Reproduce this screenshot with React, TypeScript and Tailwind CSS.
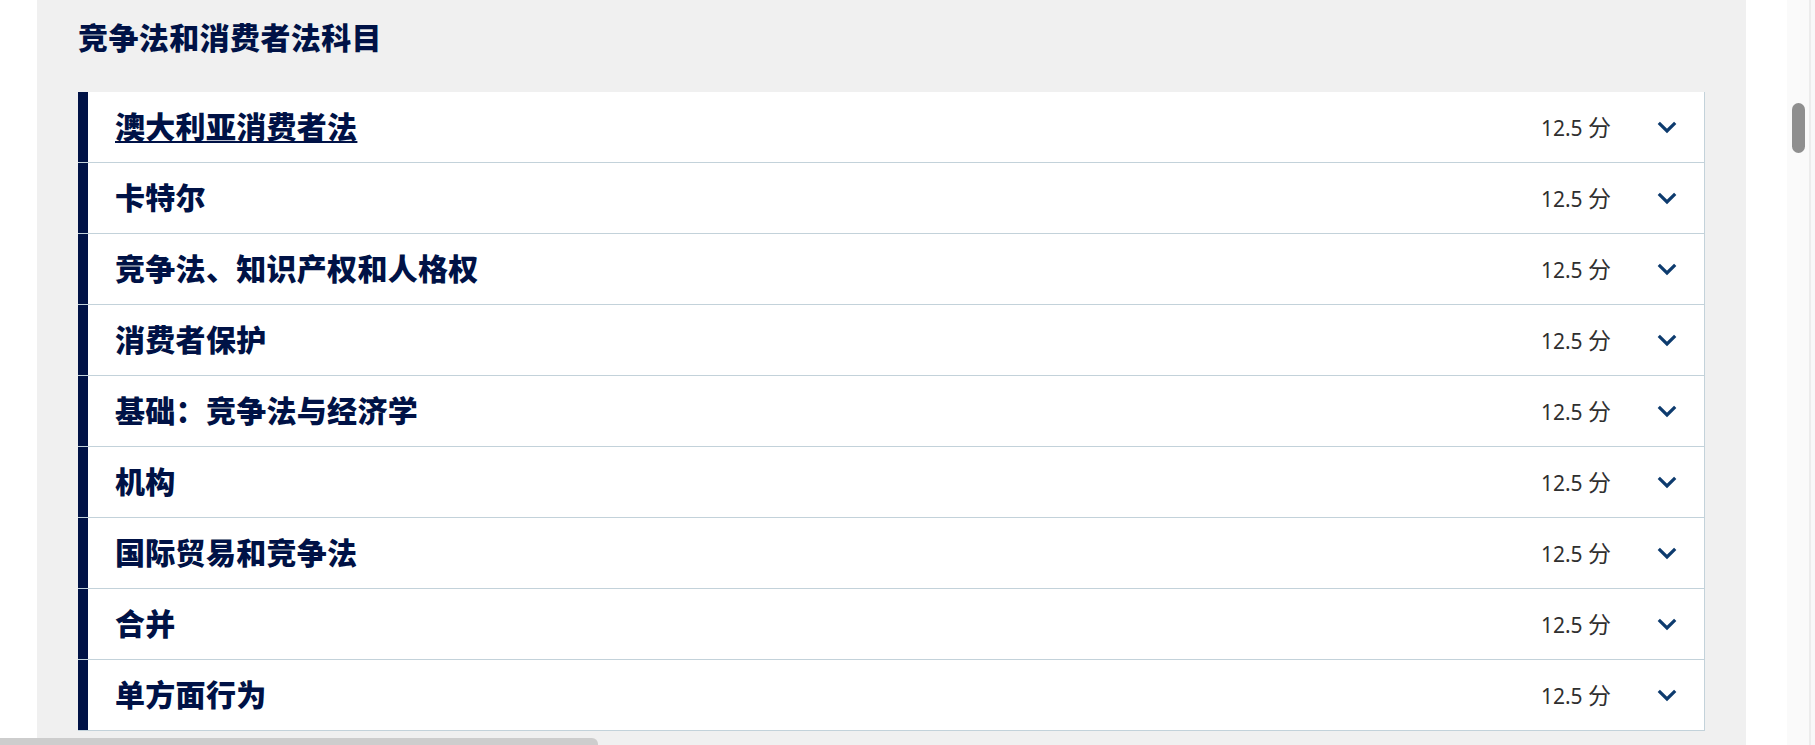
import React from 'react';

const subjects = [
  '澳大利亚消费者法',
  '卡特尔',
  '竞争法、知识产权和人格权',
  '消费者保护',
  '基础：竞争法与经济学',
  '机构',
  '国际贸易和竞争法',
  '合并',
  '单方面行为',
];

function Chevron() {
  return (
    <svg width="20" height="13" viewBox="0 0 20 13" className="ml-[46px] mr-[27px] shrink-0" aria-hidden="true">
      <path d="M1.8 1.8 L10 10 L18.2 1.8" fill="none" stroke="#0d3b6e" strokeWidth="3.2" />
    </svg>
  );
}

export default function App() {
  return (
    <div className="flex h-[745px] w-[1815px] overflow-hidden bg-white font-['Noto_Sans','Noto_Sans_CJK_SC',sans-serif]">
      {/* page column */}
      <div className="relative flex w-[1746px] shrink-0">
        <div className="w-[37px] shrink-0" />
        <main className="flex-1 bg-[#f0f0f0] pl-[41px] pt-[19px]">
          <h2 className="text-[30px] font-black leading-[38px] tracking-[0.4px] text-[#001246]">竞争法和消费者法科目</h2>

          <ul className="mt-[35px] w-[1627px]">
            {subjects.map((title, idx) => (
              <li
                key={title}
                className="flex h-[71px] items-center border-r border-b border-[#c3d2da] bg-white"
              >
                <span className="w-[10px] shrink-0 self-stretch bg-[#001246]" />
                <span
                  className={`ml-[27px] flex-1 text-[30px] font-black leading-[40px] tracking-[0.3px] text-[#001246] ${
                    idx === 0 ? 'underline decoration-2 underline-offset-[3px]' : ''
                  }`}
                >
                  {title}
                </span>
                <span className="text-[21px] leading-[28px] text-[#2f2f2f]">
                  12.5 <span className="text-[23px]">分</span>
                </span>
                <Chevron />
              </li>
            ))}
          </ul>
        </main>

        {/* horizontal scrollbar thumb */}
        <div className="absolute bottom-0 left-0 h-[7px] w-[598px] rounded-tr-[6px] bg-[#cdcdcd]" />
      </div>

      <div className="w-[41px] shrink-0" />

      {/* vertical scrollbar */}
      <div className="flex w-[28px] shrink-0">
        <div className="w-[22px] bg-[#fafafa] pl-[5px] pt-[103px]">
          <div className="h-[50px] w-[13px] rounded-full bg-[#8f8f8f]" />
        </div>
        <div className="w-[2px] bg-[#ececec]" />
        <div className="flex-1 bg-[#f8f8f8]" />
      </div>
    </div>
  );
}
